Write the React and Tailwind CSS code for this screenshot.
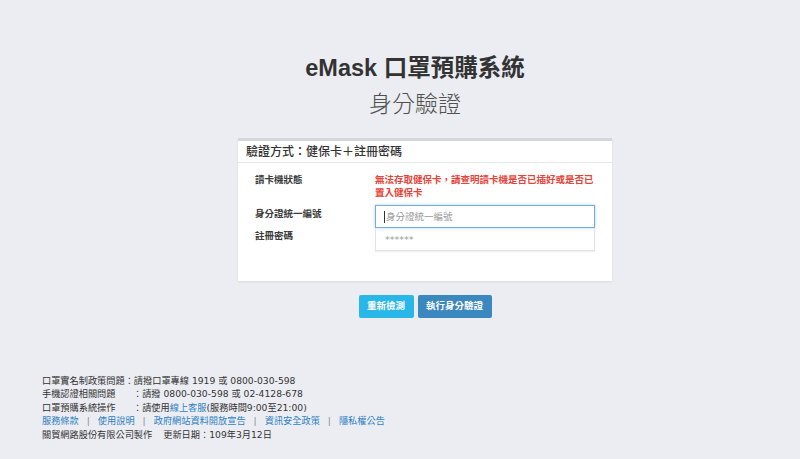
export default function App() {
  return (
    <div className="min-h-[459px] w-[800px] bg-[#ebedf2] text-[#333] flex flex-col [font-family:'Liberation_Sans','Noto_Sans_CJK_TC',sans-serif]">
      <div className="ml-[238px] w-[374px] pt-[54px] flex flex-col">
        <div className="pr-[20px] flex flex-col items-center">
          <h1 className="text-[23.5px] leading-[28px] font-bold text-[#333] whitespace-nowrap">eMask 口罩預購系統</h1>
          <div className="mt-[8px] text-[23px] leading-[28px] font-light text-[#505050] whitespace-nowrap">身分驗證</div>
        </div>

        <div className="mt-[20px] bg-white border-t-[3px] border-[#d5d7de] shadow-[0_1px_2px_rgba(0,0,0,0.08)]">
          <div className="h-[22px] flex items-center px-[8px] border-b border-[#e6e7eb] text-[12px] font-medium text-[#333] whitespace-nowrap">
            驗證方式：健保卡＋註冊密碼
          </div>
          <div className="px-[17px] pt-[10px] pb-[30px] text-[9.5px] leading-[13px]">
            <div className="grid grid-cols-[120px_1fr]">
              <div className="font-semibold text-[#3a3a3a]">讀卡機狀態</div>
              <div className="font-semibold text-[#e5443a]">無法存取健保卡，請查明讀卡機是否已插好或是否已置入健保卡</div>
            </div>
            <div className="mt-[6px] grid grid-cols-[120px_1fr]">
              <div className="flex flex-col pt-[2px] font-semibold text-[#3a3a3a]">
                <div>身分證統一編號</div>
                <div className="mt-[9px]">註冊密碼</div>
              </div>
              <div className="flex flex-col">
                <div className="h-[23px] border border-[#78acd9] shadow-[0_0_3px_rgba(102,175,233,0.5)] flex items-center pl-[8px] text-[#9a9a9a]">
                  <span className="w-[1px] h-[12px] bg-[#333] mr-[1px]"></span>
                  <span>身分證統一編號</span>
                </div>
                <div className="h-[23px] border border-t-0 border-[#e2e3e6] shadow-[0_1px_1px_rgba(0,0,0,0.06)] flex items-center pl-[9px] text-[#9a9a9a] text-[9.5px] [font-family:'DejaVu_Sans',sans-serif]">
                  ******
                </div>
              </div>
            </div>
          </div>
        </div>

        <div className="mt-[14px] flex justify-center gap-[4px]">
          <div className="w-[55px] h-[23px] rounded-[2px] bg-[#29b6e9] text-white text-[9.5px] font-semibold flex items-center justify-center">重新檢測</div>
          <div className="w-[74px] h-[23px] rounded-[2px] bg-[#3b87bf] text-white text-[9.5px] font-semibold flex items-center justify-center">執行身分驗證</div>
        </div>
      </div>

      <div className="mt-[56px] pl-[42px] text-[9.2px] leading-[13.4px] text-[#333] whitespace-nowrap [font-family:'DejaVu_Sans','Noto_Sans_CJK_TC',sans-serif]">
        <div>口罩實名制政策問題：請撥口罩專線 1919 或 0800-030-598</div>
        <div><span className="inline-block w-[91px]">手機認證相關問題</span>：請撥 0800-030-598 或 02-4128-678</div>
        <div><span className="inline-block w-[91px]">口罩預購系統操作</span>：請使用<span className="text-[#2f7fc3]">線上客服</span>(服務時間9:00至21:00)</div>
        <div className="text-[#2f7fc3]">
          <span>服務條款</span>
          <span className="mx-[8px] text-[#888]">|</span>
          <span>使用說明</span>
          <span className="mx-[8px] text-[#888]">|</span>
          <span>政府網站資料開放宣告</span>
          <span className="mx-[8px] text-[#888]">|</span>
          <span>資訊安全政策</span>
          <span className="mx-[8px] text-[#888]">|</span>
          <span>隱私權公告</span>
        </div>
        <div>關貿網路股份有限公司製作<span className="ml-[11px]">更新日期：109年3月12日</span></div>
      </div>
    </div>
  );
}
